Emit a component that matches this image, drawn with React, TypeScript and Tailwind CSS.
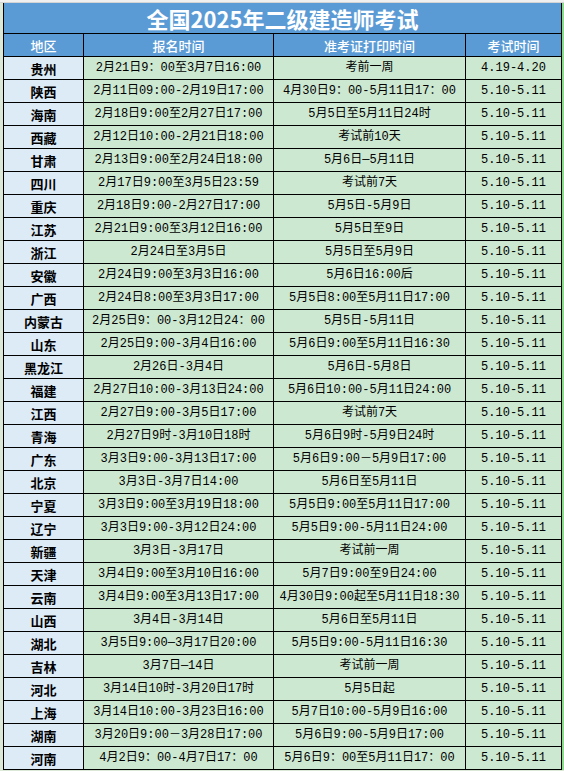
const rows: [string, string, string, string][] = [
  ['贵州', '2月21日9：00至3月7日16:00', '考前一周', '4.19-4.20'],
  ['陕西', '2月11日09:00-2月19日17:00', '4月30日9：00-5月11日17：00', '5.10-5.11'],
  ['海南', '2月18日9:00至2月27日17:00', '5月5日至5月11日24时', '5.10-5.11'],
  ['西藏', '2月12日10:00-2月21日18:00', '考试前10天', '5.10-5.11'],
  ['甘肃', '2月13日9:00至2月24日18:00', '5月6日—5月11日', '5.10-5.11'],
  ['四川', '2月17日9:00至3月5日23:59', '考试前7天', '5.10-5.11'],
  ['重庆', '2月18日9:00-2月27日17:00', '5月5日-5月9日', '5.10-5.11'],
  ['江苏', '2月21日9:00至3月12日16:00', '5月5日至9日', '5.10-5.11'],
  ['浙江', '2月24日至3月5日', '5月5日至5月9日', '5.10-5.11'],
  ['安徽', '2月24日9:00至3月3日16:00', '5月6日16:00后', '5.10-5.11'],
  ['广西', '2月24日8:00至3月3日17:00', '5月5日8:00至5月11日17:00', '5.10-5.11'],
  ['内蒙古', '2月25日9：00-3月12日24：00', '5月5日-5月11日', '5.10-5.11'],
  ['山东', '2月25日9:00-3月4日16:00', '5月6日9:00至5月11日16:30', '5.10-5.11'],
  ['黑龙江', '2月26日-3月4日', '5月6日-5月8日', '5.10-5.11'],
  ['福建', '2月27日10:00-3月13日24:00', '5月6日10:00-5月11日24:00', '5.10-5.11'],
  ['江西', '2月27日9:00-3月5日17:00', '考试前7天', '5.10-5.11'],
  ['青海', '2月27日9时-3月10日18时', '5月6日9时-5月9日24时', '5.10-5.11'],
  ['广东', '3月3日9:00-3月13日17:00', '5月6日9:00－5月9日17:00', '5.10-5.11'],
  ['北京', '3月3日-3月7日14:00', '5月6日至5月11日', '5.10-5.11'],
  ['宁夏', '3月3日9:00至3月19日18:00', '5月5日9:00至5月11日17:00', '5.10-5.11'],
  ['辽宁', '3月3日9:00-3月12日24:00', '5月5日9:00-5月11日24:00', '5.10-5.11'],
  ['新疆', '3月3日-3月17日', '考试前一周', '5.10-5.11'],
  ['天津', '3月4日9:00至3月10日16:00', '5月7日9:00至9日24:00', '5.10-5.11'],
  ['云南', '3月4日9:00至3月13日17:00', '4月30日9:00起至5月11日18:30', '5.10-5.11'],
  ['山西', '3月4日-3月14日', '5月6日至5月11日', '5.10-5.11'],
  ['湖北', '3月5日9:00—3月17日20:00', '5月5日9:00-5月11日16:30', '5.10-5.11'],
  ['吉林', '3月7日—14日', '考试前一周', '5.10-5.11'],
  ['河北', '3月14日10时-3月20日17时', '5月5日起', '5.10-5.11'],
  ['上海', '3月14日10:00-3月23日16:00', '5月7日10:00-5月9日16:00', '5.10-5.11'],
  ['湖南', '3月20日9:00－3月28日17:00', '5月6日9:00-5月9日17:00', '5.10-5.11'],
  ['河南', '4月2日9：00-4月7日17：00', '5月6日9：00至5月11日17：00', '5.10-5.11'],
];

const headers = ['地区', '报名时间', '准考证打印时间', '考试时间'];

export default function App() {
  return (
    <div className="w-[564px] h-[771px] bg-[#dbe8d8] overflow-hidden flex flex-col">
      <div className="h-[3px] bg-[#f0f0f0] border-b border-[#d4d4d4]" />
      <div className="flex">
        <div className="w-[3px] bg-[#dbe8d8]" />
        <div className="grid grid-cols-[80px_190px_192px_96px] border-l border-black">
          <div className="col-span-4 h-[31px] bg-[#5b9bd5] border-r border-b border-black flex items-center justify-center text-white text-[22px] font-bold font-['Noto_Sans_CJK_SC',sans-serif] leading-none">
            全国2025年二级建造师考试
          </div>
          {headers.map((h) => (
            <div
              key={h}
              className="h-[23px] bg-[#5b9bd5] border-r border-b border-black flex items-center justify-center text-white text-[13px] font-medium font-['Noto_Sans_CJK_SC',sans-serif] leading-none"
            >
              {h}
            </div>
          ))}
          {rows.map(([region, signup, ticket, exam]) => (
            <div key={region} className="contents">
              <div className="h-[23px] bg-[#ddebf7] border-r border-b border-black flex items-center justify-center text-black text-[13px] font-bold font-['Noto_Sans_CJK_SC',sans-serif] leading-none">
                {region}
              </div>
              <div className="h-[23px] bg-[#cde8d0] border-r border-b border-black flex items-center justify-center text-black text-[12px] font-['Liberation_Mono','Noto_Sans_CJK_SC',monospace] leading-none whitespace-nowrap">
                {signup}
              </div>
              <div className="h-[23px] bg-[#cde8d0] border-r border-b border-black flex items-center justify-center text-black text-[12px] font-['Liberation_Mono','Noto_Sans_CJK_SC',monospace] leading-none whitespace-nowrap">
                {ticket}
              </div>
              <div className="h-[23px] bg-[#cde8d0] border-r border-b border-black flex items-center justify-center text-black text-[12px] font-['Liberation_Mono','Noto_Sans_CJK_SC',monospace] leading-none whitespace-nowrap">
                {exam}
              </div>
            </div>
          ))}
        </div>
        <div className="w-[2px] bg-[#8fd98f]" />
      </div>
    </div>
  );
}
